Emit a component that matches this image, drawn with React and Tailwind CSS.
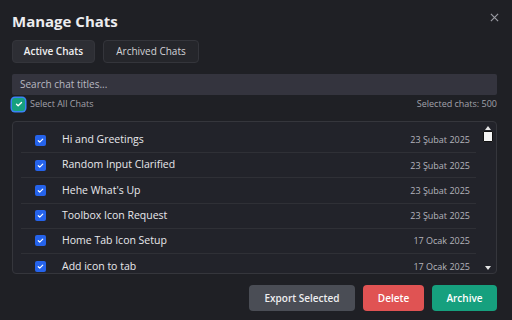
import React from 'react';

const chats = [
    { title: 'Hi and Greetings', date: '23 Şubat 2025' },
    { title: 'Random Input Clarified', date: '23 Şubat 2025' },
    { title: "Hehe What's Up", date: '23 Şubat 2025' },
    { title: 'Toolbox Icon Request', date: '23 Şubat 2025' },
    { title: 'Home Tab Icon Setup', date: '17 Ocak 2025' },
    { title: 'Add icon to tab', date: '17 Ocak 2025' },
];

function Check({ className = '' }) {
    return (
        <svg viewBox="0 0 12 12" className={className}>
            <path d="M3 6.3l2 1.9 4-4" fill="none" stroke="white" strokeWidth="1.6" strokeLinecap="round" strokeLinejoin="round" />
        </svg>
    );
}

export default function App() {
    return (
        <div className="w-[512px] h-[320px] bg-[#1f2025] text-[#e4e4e7] overflow-hidden px-3 pt-[10px] relative" style={{ fontFamily: '"Open Sans", sans-serif' }}>
            <div className="flex items-center justify-between h-[22px]">
                <h1 className="text-[15px] font-bold text-[#ececef]">Manage Chats</h1>
                <button className="text-[#9a9ba3] mr-[1px] -mt-[8px]">
                    <svg viewBox="0 0 10 10" className="w-[9px] h-[9px]">
                        <path d="M1 1l8 8M9 1l-8 8" stroke="currentColor" strokeWidth="1.3" />
                    </svg>
                </button>
            </div>

            <div className="flex gap-2 mt-[8px]">
                <button className="h-[23px] w-[83px] rounded-[4px] bg-[#2d2e34] border border-[#34353b] text-[10px] font-semibold text-[#f0f0f2]">Active Chats</button>
                <button className="h-[23px] w-[96px] rounded-[4px] bg-[#25262b] border border-[#34353b] text-[10px] text-[#d4d4d8]">Archived Chats</button>
            </div>

            <div className="mt-[11px] h-[21px] w-[485px] bg-[#34343e] rounded-[2px] flex items-center px-2 text-[10px] text-[#b9b9c2]">
                Search chat titles...
            </div>

            <div className="flex items-center justify-between h-[18px] w-[485px]">
                <div className="flex items-center gap-[5px]">
                    <div className="w-[13px] h-[13px] rounded-[3px] bg-[#17a07e] ring-[1.5px] ring-[#3b82f6] flex items-center justify-center">
                        <Check className="w-[10px] h-[10px]" />
                    </div>
                    <span className="text-[9px] text-[#a1a1aa]">Select All Chats</span>
                </div>
                <span className="text-[9px] text-[#a1a1aa]">Selected chats: 500</span>
            </div>

            <div className="mt-[8px] w-[485px] h-[153px] border border-[#35363c] rounded-[4px] bg-[#22232a] flex overflow-hidden">
                <div className="flex-1 pl-[8px] pr-[6px] pt-[6px]">
                    {chats.map((c, i) => (
                        <div key={i} className={`flex items-center h-[25.2px] ${i < chats.length - 1 ? 'border-b border-[#2f3036]' : ''}`}>
                            <div className="w-[11px] h-[11px] ml-[14px] rounded-[2px] bg-[#2563eb] flex items-center justify-center">
                                <Check className="w-[9px] h-[9px]" />
                            </div>
                            <span className="ml-[16px] text-[10.5px] text-[#e8e8ec]">{c.title}</span>
                            <span className="ml-auto mr-[6px] text-[9px] text-[#b4b4bc]">{c.date}</span>
                        </div>
                    ))}
                </div>
                <div className="w-[12px] flex flex-col items-center pt-[4px] pb-[3px] mr-[2px]">
                    <svg viewBox="0 0 6 4" className="w-[6px] h-[4px]"><path d="M0 4L3 0L6 4z" fill="#e5e5e5" /></svg>
                    <div className="w-[10px] h-[11px] bg-[#f4f4f4] border border-[#111] rounded-[1px] mt-[1px]" />
                    <div className="flex-1" />
                    <svg viewBox="0 0 6 4" className="w-[6px] h-[4px]"><path d="M0 0L3 4L6 0z" fill="#e5e5e5" /></svg>
                </div>
            </div>

            <div className="flex justify-end gap-2 mt-[11px] w-[485px]">
                <button className="h-[26px] w-[106px] rounded-[4px] bg-[#4a4d55] text-[10px] font-semibold text-[#eeeef0]">Export Selected</button>
                <button className="h-[26px] w-[61px] rounded-[4px] bg-[#e05353] text-[10px] font-semibold text-white">Delete</button>
                <button className="h-[26px] w-[65px] rounded-[4px] bg-[#16a07e] text-[10px] font-semibold text-white">Archive</button>
            </div>
        </div>
    );
}
